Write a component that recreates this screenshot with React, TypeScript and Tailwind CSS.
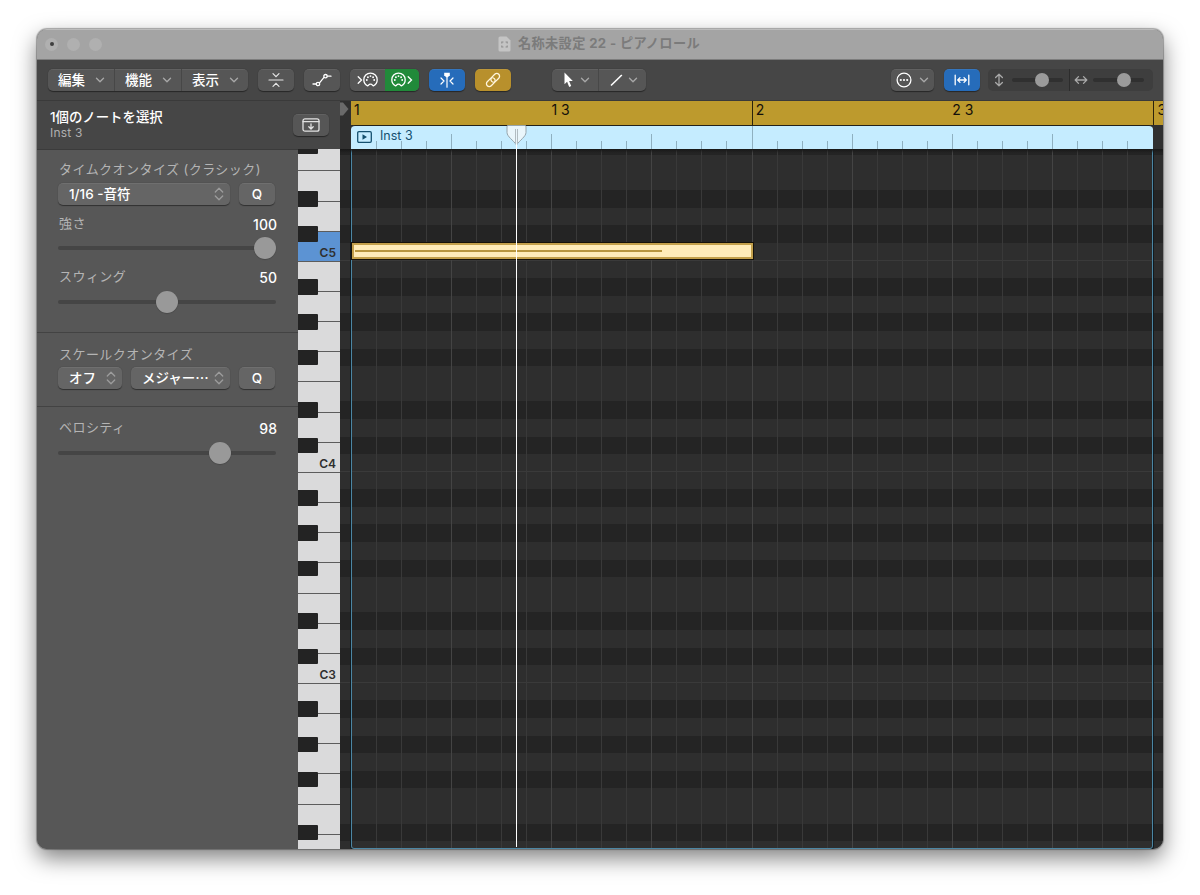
import type { ReactNode } from 'react';
import clsx from 'clsx';

const BAR_LABELS = ['1', '1 3', '2', '2 3'];

// row pattern going down the grid, starting on F#
const ROW_PATTERN = [true, false, false, true, false, true, false, false, true, false, true, false];
const ROWS = Array.from({ length: 41 }, (_, i) => ROW_PATTERN[i % 12]);
const STEPS = Array.from({ length: 32 }, (_, i) => i);
const WHITE_KEYS = Array.from({ length: 24 }, (_, i) => i);
const OCTAVES: Record<number, string> = { 3: 'C5', 10: 'C4', 17: 'C3' };

function Chevron({ className }: { className?: string }) {
  return (
    <svg width="10" height="6" viewBox="0 0 10 6" fill="none" stroke="#a6a6a6" strokeWidth="1.4" strokeLinecap="round" strokeLinejoin="round" className={className}>
      <path d="M1.5 1.2L5 4.7L8.5 1.2" />
    </svg>
  );
}

function UpDown() {
  return (
    <svg width="10" height="14" viewBox="0 0 10 14" fill="none" stroke="#9c9c9c" strokeWidth="1.3" strokeLinecap="round" strokeLinejoin="round">
      <path d="M1.3 5L5 1.2L8.7 5M1.3 9L5 12.8L8.7 9" />
    </svg>
  );
}

function MidiPlug({ x }: { x: number }) {
  return (
    <g transform={`translate(${x} 0)`}>
      <path d="M4.6 13.9C2.2 12.8 0.8 10.6 0.8 7.8C0.8 4 3.7 1.2 7.5 1.2S14.2 4 14.2 7.8C14.2 10.6 12.8 12.8 10.4 13.9C9.6 14.1 9.6 12.2 7.5 12.2S5.4 14.1 4.6 13.9Z" />
      <g fill="white" stroke="none">
        <circle cx="3.8" cy="8" r="0.95" />
        <circle cx="4.9" cy="5.3" r="0.95" />
        <circle cx="7.5" cy="4.1" r="0.95" />
        <circle cx="10.1" cy="5.3" r="0.95" />
        <circle cx="11.2" cy="8" r="0.95" />
      </g>
    </g>
  );
}

function Button({ className, children }: { className?: string; children: ReactNode }) {
  return (
    <button
      className={clsx(
        'flex h-[22px] shrink-0 items-center justify-center rounded-[5px] shadow-[0_0.5px_1px_rgba(0,0,0,0.45),inset_0_0.5px_0_rgba(255,255,255,0.14)]',
        className
      )}
    >
      {children}
    </button>
  );
}

function MenuItem({ label, className }: { label: string; className: string }) {
  return (
    <span className={clsx('flex h-full items-center', className)}>
      {label}
      <Chevron className="ml-[10px]" />
    </span>
  );
}

function Toolbar() {
  return (
    <div className="flex h-[41px] shrink-0 items-center border-b border-[#3a3a3a] bg-[#464646] pl-[11px] pr-[10px] text-[13.5px] font-medium text-white">
      <Button className="w-[200px] bg-[#565656]">
        <MenuItem label="編集" className="w-[67px] border-r border-[#474747] pl-[10px]" />
        <MenuItem label="機能" className="w-[67px] border-r border-[#474747] pl-[10px]" />
        <MenuItem label="表示" className="w-[66px] pl-[10px]" />
      </Button>
      <Button className="ml-[10px] w-[36px] bg-[#565656]">
        <svg width="16" height="16" viewBox="0 0 16 16" fill="none" stroke="#e6e6e6" strokeWidth="1.2" strokeLinecap="round">
          <path d="M1 8H15M5 1.6L8 4.7L11 1.6M5 14.4L8 11.3L11 14.4" />
        </svg>
      </Button>
      <Button className="ml-[10px] w-[36px] bg-[#565656]">
        <svg width="20" height="14" viewBox="0 0 20 14" fill="none" stroke="white" strokeWidth="1.3" strokeLinecap="round">
          <path d="M1 11H4.2M7.5 9.8L12 4.4M15.3 3.2H19" />
          <circle cx="6" cy="11" r="1.7" />
          <circle cx="13.5" cy="3.2" r="1.7" />
        </svg>
      </Button>
      <Button className="ml-[10px] w-[69px] overflow-hidden bg-[#565656]">
        <span className="flex h-full w-[35px] items-center justify-center">
          <svg width="22" height="16" viewBox="0 0 22 16" fill="none" stroke="white" strokeWidth="1.3" strokeLinecap="round">
            <path d="M1.2 4.8L4.5 8L1.2 11.2" />
            <MidiPlug x={6} />
          </svg>
        </span>
        <span className="flex h-full w-[34px] items-center justify-center bg-[#218a3a]">
          <svg width="22" height="16" viewBox="0 0 22 16" fill="none" stroke="white" strokeWidth="1.3" strokeLinecap="round">
            <MidiPlug x={0} />
            <path d="M17.2 4.8L20.5 8L17.2 11.2" />
          </svg>
        </span>
      </Button>
      <Button className="ml-[10px] w-[36px] bg-[#266cba]">
        <svg width="16" height="16" viewBox="0 0 16 16" fill="none" stroke="white" strokeWidth="1.2" strokeLinecap="round">
          <path d="M8 3V15.2M2 6L5 9L2 12M14 6L11 9L14 12" />
          <path d="M5.2 0.8H10.8V3.2L8.8 5.2H7.2L5.2 3.2Z" fill="white" stroke="none" />
        </svg>
      </Button>
      <Button className="ml-[10px] w-[36px] bg-[#b8902c]">
        <svg width="18" height="18" viewBox="0 0 18 18" fill="none" stroke="#fff5dc" strokeWidth="1.3" strokeLinecap="round">
          <rect x="-5" y="-2.8" width="10" height="5.6" rx="2.8" transform="translate(11.2 6.8) rotate(-45)" />
          <rect x="-5" y="-2.8" width="10" height="5.6" rx="2.8" transform="translate(6.8 11.2) rotate(-45)" />
        </svg>
      </Button>
      <Button className="ml-[41px] w-[94px] bg-[#565656]">
        <span className="flex h-full w-[47px] items-center border-r border-[#484848] pl-[11px]">
          <svg width="11" height="16" viewBox="0 0 11 16" fill="white">
            <path d="M1.5 0.6V12.2L4.1 9.8L6.2 14.9L8.2 14L6.1 9.1H9.8Z" />
          </svg>
          <Chevron className="ml-[6px]" />
        </span>
        <span className="flex h-full w-[47px] items-center pl-[11px]">
          <svg width="14" height="14" viewBox="0 0 14 14" stroke="white" strokeWidth="1.6">
            <path d="M1 12.5L11.8 2" />
          </svg>
          <Chevron className="ml-[4px]" />
        </span>
      </Button>
      <div className="mb-px ml-auto flex items-center">
        <Button className="w-[43px] bg-[#565656]">
          <svg width="16" height="16" viewBox="0 0 16 16" fill="none" stroke="white" strokeWidth="1.3">
            <circle cx="8" cy="8" r="6.9" />
            <g fill="white" stroke="none">
              <circle cx="4.8" cy="8" r="1.1" />
              <circle cx="8" cy="8" r="1.1" />
              <circle cx="11.2" cy="8" r="1.1" />
            </g>
          </svg>
          <Chevron className="ml-[7px]" />
        </Button>
        <Button className="ml-[10px] w-[36px] bg-[#266cba]">
          <svg width="16" height="12" viewBox="0 0 16 12" fill="none" stroke="white" strokeWidth="1.3" strokeLinecap="round" strokeLinejoin="round">
            <path d="M1.2 1.2V10.8M14.8 1.2V10.8M4 6H12M6 3.6L3.7 6L6 8.4M10 3.6L12.3 6L10 8.4" />
          </svg>
        </Button>
        <div className="ml-[8px] flex h-[22px] w-[165px] items-center rounded-[5px] bg-[#3e3e3e]">
          <span className="flex h-full w-[82px] items-center border-r border-[#2c2c2c] pl-[6px]">
            <svg width="10" height="14" viewBox="0 0 10 14" fill="none" stroke="#a8a8a8" strokeWidth="1.3" strokeLinecap="round" strokeLinejoin="round">
              <path d="M5 1.5V12.5M1.6 4.5L5 1.2L8.4 4.5M1.6 9.5L5 12.8L8.4 9.5" />
            </svg>
            <MiniSlider value={59} className="ml-[8px]" />
          </span>
          <span className="flex h-full items-center pl-[4px]">
            <svg width="14" height="10" viewBox="0 0 14 10" fill="none" stroke="#a8a8a8" strokeWidth="1.3" strokeLinecap="round" strokeLinejoin="round">
              <path d="M1.5 5H12.5M4.5 1.6L1.2 5L4.5 8.4M9.5 1.6L12.8 5L9.5 8.4" />
            </svg>
            <MiniSlider value={60} className="ml-[5px]" />
          </span>
        </div>
      </div>
    </div>
  );
}

function MiniSlider({ value, className }: { value: number; className: string }) {
  return (
    <span className={clsx('relative h-[4px] w-[51px] rounded-full bg-[#303030]', className)}>
      <span className="absolute top-[-5px] size-[14px] -translate-x-1/2 rounded-full bg-[#9b9b9b]" style={{ left: `${value}%` }} />
    </span>
  );
}

function Slider({ value }: { value: number }) {
  return (
    <div className="flex h-[22px] items-center">
      <div className="relative h-[4px] w-[218px] rounded-full bg-[#454545]">
        <div
          className="absolute top-[-9px] size-[22px] -translate-x-1/2 rounded-full bg-[#999999] shadow-[0_0.5px_1px_rgba(0,0,0,0.3)]"
          style={{ left: `${value}%` }}
        />
      </div>
    </div>
  );
}

function ParamRow({ label, value }: { label: string; value?: string }) {
  return (
    <div className="flex h-5 w-[219px] items-center justify-between whitespace-nowrap pl-px">
      <span className="tracking-[0.45px] text-[#b4b4b4]">{label}</span>
      {value && <span className="text-[14px] font-medium text-white">{value}</span>}
    </div>
  );
}

function Select({ label, className }: { label: ReactNode; className: string }) {
  return (
    <Button className={clsx('bg-[#656565] pl-[11px] pr-[6px] text-[13.5px] text-white', className)}>
      <span className="mr-auto whitespace-nowrap font-medium">{label}</span>
      <UpDown />
    </Button>
  );
}

function Inspector() {
  return (
    <aside className="flex w-[261px] shrink-0 flex-col bg-[#575757] text-[13px]">
      {/* header runs on above the keyboard */}
      <div className="flex h-[49px] w-[303px] items-center justify-between border-b border-[#3b3b3b] bg-[#464646] pl-[13px] pr-[11px]">
        <div>
          <p className="text-[13.4px] font-medium leading-[16px] text-white">1個のノートを選択</p>
          <p className="text-[12px] leading-[16px] tracking-[0.2px] text-[#b0b0b0]">Inst 3</p>
        </div>
        <Button className="mb-px w-[36px] bg-[#565656]">
          <svg width="18" height="14" viewBox="0 0 18 14" fill="none" stroke="#e2e2e2" strokeWidth="1.3" strokeLinecap="round">
            <rect x="1" y="0.8" width="16" height="12.4" rx="2" />
            <path d="M1 3.7H17M9 5.8V10.8M6.8 8.8L9 11L11.2 8.8" />
          </svg>
        </Button>
      </div>
      <section className="h-[183px] border-b border-[#434343] pl-[21px] pt-[10px]">
        <ParamRow label="タイムクオンタイズ (クラシック)" />
        <div className="mt-[3px] flex gap-[9px]">
          <Select label="1/16 -音符" className="w-[172px]" />
          <Button className="w-[36px] bg-[#656565] text-[13.5px] font-medium text-white">Q</Button>
        </div>
        <div className="mt-[9px]">
          <ParamRow label="強さ" value="100" />
        </div>
        <div className="mt-[3px]">
          <Slider value={95} />
        </div>
        <div className="mt-[8px]">
          <ParamRow label="スウィング" value="50" />
        </div>
        <div className="mt-[4px]">
          <Slider value={50} />
        </div>
      </section>
      <section className="h-[74px] border-b border-[#434343] pl-[21px] pt-[12px]">
        <ParamRow label="スケールクオンタイズ" />
        <div className="mt-[2px] flex gap-[9px]">
          <Select label="オフ" className="w-[64px]" />
          <Select
            label={
              <>
                メジャー<span className="font-['Noto_Sans_CJK_JP',sans-serif]">…</span>
              </>
            }
            className="w-[99px]"
          />
          <Button className="w-[36px] bg-[#656565] text-[13.5px] font-medium text-white">Q</Button>
        </div>
      </section>
      <section className="pl-[21px] pt-[11px]">
        <ParamRow label="ベロシティ" value="98" />
        <div className="mt-[4px]">
          <Slider value={74.3} />
        </div>
      </section>
    </aside>
  );
}

function Keyboard() {
  return (
    <div className="relative h-[700px] w-[42px] shrink-0 overflow-hidden bg-[#dadadb]">
      <div className="-mt-[7.8px] flex flex-col">
        {WHITE_KEYS.map((i) => (
          <div
            key={i}
            className={clsx(
              'flex h-[30.17px] shrink-0 items-end justify-end border-b-[1.5px] border-[#5c5c5c] pb-[1px] pr-[4px] text-[12px] font-semibold leading-[15px] text-[#2f2f2f]',
              i === 3 && 'bg-[#5c93d3]'
            )}
          >
            {OCTAVES[i]}
          </div>
        ))}
      </div>
      {/* black keys sit on top of the white ones */}
      <div className="absolute -top-[11.6px] left-0 flex w-[20px] flex-col">
        {ROWS.map((black, i) => (
          <div key={i} className="h-[17.6px] shrink-0 py-[1px]">
            {black && <div className="h-full rounded-r-[1px] bg-[#232323]" />}
          </div>
        ))}
      </div>
    </div>
  );
}

function NoteGrid() {
  return (
    <div className="relative h-[700px] grow overflow-hidden bg-[#2e2e2e]">
      <div className="-mt-[11.6px] flex flex-col">
        {ROWS.map((black, i) => (
          <div
            key={i}
            className={clsx('h-[17.6px] shrink-0', black && 'bg-[#242424]', i % 12 === 6 && 'border-b border-[#3a3a3a]')}
          />
        ))}
      </div>
      <div className="absolute inset-y-0 left-[11px] flex w-[801px]">
        {STEPS.map((i) => (
          <div key={i} className={clsx('grow basis-0 border-l', i % 4 === 0 ? 'border-[#444444]' : 'border-[#393939]')} />
        ))}
      </div>
      <div className="absolute -top-1 bottom-0 left-[11px] w-[802px] rounded-b-[3px] border border-[#4c86a3] shadow-[0_0_0_1px_#101a20]" />
      <div className="absolute inset-x-0 top-0 h-[4px] bg-linear-to-b from-[#181818] to-transparent" />
      <div className="absolute left-[11px] top-[93px] flex h-[18px] w-[403px] items-center border border-[#16120a] bg-[#16120a]">
        <div className="h-full w-full border-2 border-[#c3a04b] bg-[#ffecb9] pl-[1px] pt-[5px]">
          <div className="h-[2px] w-[307px] bg-[#b8963f]" />
        </div>
      </div>
    </div>
  );
}

function Timeline() {
  return (
    <div className="flex h-[48px] grow bg-[#303030]">
      <div className="w-[11px] shrink-0 pt-[1px]">
        <svg width="9" height="14" viewBox="0 0 9 14" fill="#6a6a6a">
          <path d="M0 0.5H3L8.5 7L3 13.5H0Z" />
        </svg>
      </div>
      <div className="flex min-w-0 grow flex-col">
        <div className="flex h-[24px] shrink-0 overflow-hidden bg-[#bd9a2d] text-[14px] leading-[17px] text-[#14100a]">
          {BAR_LABELS.map((label, i) => (
            <div key={label} className={clsx('w-[200.4px] shrink-0', i === 2 ? 'border-l border-[#2a220c] pl-[3px]' : i === 0 ? 'pl-[3px]' : 'pl-0')}>
              {label}
            </div>
          ))}
          <div className="shrink-0 border-l border-[#2a220c] pl-[4px]">3</div>
        </div>
        <div className="relative flex h-[24px] w-[802px] items-end overflow-hidden rounded-t-[4px] border-t border-[#23211a] bg-[#c5ecff]">
          <div className="flex h-full w-[801px] shrink-0 items-end">
            {STEPS.map((i) => (
              <div
                key={i}
                className={clsx(
                  'grow basis-0 border-l',
                  i === 0 ? 'h-0 border-transparent' : i === 16 ? 'h-full border-[#8fb0c0]' : i % 4 === 0 ? 'h-[15px] border-[#8fb0c0]' : 'h-[8px] border-[#8fb0c0]'
                )}
              />
            ))}
          </div>
          <div className="absolute left-[6px] top-0 flex h-[21px] items-center gap-[8px] text-[12.5px] text-[#14506f]">
            <svg width="15" height="12" viewBox="0 0 15 12" fill="none" stroke="#14506f" strokeWidth="1.3">
              <rect x="0.7" y="0.7" width="13.6" height="10.6" rx="1.2" />
              <path d="M5.5 3.2L10 6L5.5 8.8Z" fill="#14506f" stroke="none" />
            </svg>
            Inst 3
          </div>
        </div>
      </div>
    </div>
  );
}

function Playhead() {
  return (
    <div className="absolute left-[208px] top-[24px] flex w-[21px] flex-col items-center">
      <svg width="21" height="22" viewBox="0 0 21 22">
        <path d="M2 0.5H19C19.6 0.5 20 1 20 1.7V7.5C20 11.5 13.5 15.5 10.5 20C7.5 15.5 1 11.5 1 7.5V1.7C1 1 1.4 0.5 2 0.5Z" fill="#eaf6fb" stroke="#96a4ab" />
        <path d="M9.5 4V18M11.5 4V18" stroke="#a3adb2" strokeWidth="0.8" />
      </svg>
      <div className="-mt-[3px] h-[703px] w-[1.5px] bg-white" />
    </div>
  );
}

export default function App() {
  return (
    <div className="h-[895px] w-[1200px] overflow-hidden bg-white pl-[37px] pt-[29px] font-['Inter','Noto_Sans_CJK_JP',sans-serif]">
      <div className="h-[820px] w-[1126px] rounded-[10px] shadow-[0_0_1px_1px_rgba(0,0,0,0.3),0_9px_22px_rgba(0,0,0,0.5)]">
        <div className="flex h-full flex-col overflow-hidden rounded-[10px] bg-[#464646]">
          <header className="flex h-[31px] shrink-0 items-center border-b border-[#7d7d7d] bg-[#a4a4a4] shadow-[inset_0_1px_0_#bcbcbc]">
            <div className="flex w-[461px] shrink-0 gap-[9px] pl-[8px]">
              <span className="flex size-[13px] items-center justify-center rounded-full bg-[#b0b0b0]">
                <span className="size-[4px] rounded-full bg-[#3f3f3f]" />
              </span>
              <span className="size-[13px] rounded-full bg-[#b0b0b0]" />
              <span className="size-[13px] rounded-full bg-[#b0b0b0]" />
            </div>
            <svg width="13" height="16" viewBox="0 0 13 16">
              <path d="M2 0.5H8.5L12.5 4.5V14Q12.5 15.5 11 15.5H2Q0.5 15.5 0.5 14V2Q0.5 0.5 2 0.5Z" fill="#c4c4c4" />
              <path d="M3.8 7.6V6H5.4M7.6 6H9.2V7.6M9.2 9.4V11H7.6M5.4 11H3.8V9.4" fill="none" stroke="#8d8d8d" strokeWidth="1.1" />
            </svg>
            <h1 className="ml-[7px] whitespace-nowrap text-[13.2px] font-bold tracking-[0.35px] text-[#7b7b7b]">名称未設定 22 - ピアノロール</h1>
          </header>
          <Toolbar />
          <div className="flex grow">
            <Inspector />
            <div className="relative flex min-w-0 grow flex-col">
              <div className="flex pl-[42px]">
                <Timeline />
              </div>
              <div className="flex">
                <Keyboard />
                <NoteGrid />
              </div>
              <Playhead />
            </div>
          </div>
        </div>
      </div>
    </div>
  );
}
